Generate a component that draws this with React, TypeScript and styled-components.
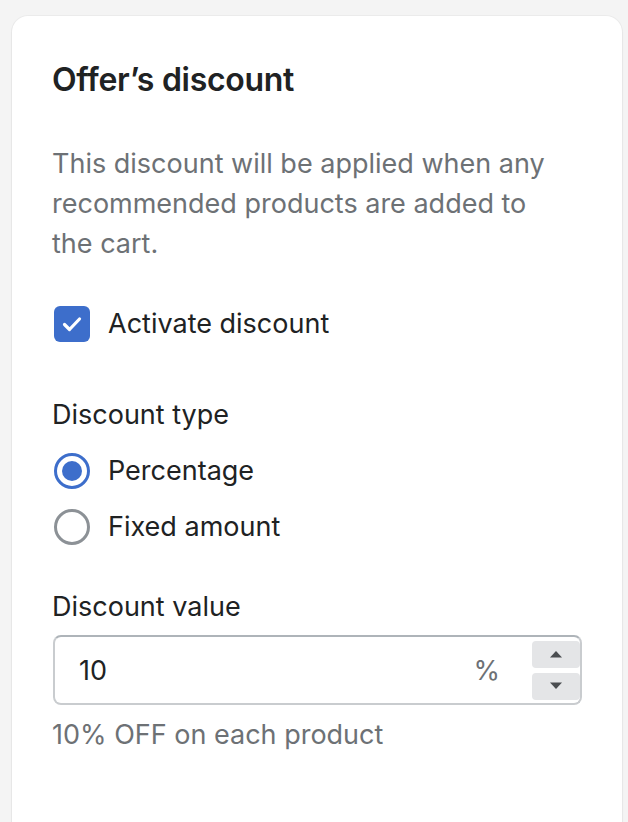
import React, { useState } from 'react';
import styled, { createGlobalStyle } from 'styled-components';

const GlobalStyle = createGlobalStyle`
  html, body {
    margin: 0;
    padding: 0;
    background: #f4f4f4;
    font-family: Inter, "Noto Sans", sans-serif;
    -webkit-font-smoothing: antialiased;
  }
`;

const Page = styled.div`
  padding: 16px 6px 0 12px;
  height: 822px;
  box-sizing: border-box;
  overflow: hidden;
`;

const Card = styled.div`
  background: #fff;
  border-radius: 16px 16px 0 0;
  box-shadow: 0 0 0 1px rgba(0, 0, 0, 0.03), 0 1px 2px rgba(0, 0, 0, 0.08);
  padding: 44px 40px 80px 40px;
  min-height: 900px;
  color: #202223;
`;

const Title = styled.h2`
  margin: 0;
  font-size: 32px;
  line-height: 40px;
  font-weight: 600;
  letter-spacing: -0.3px;
`;

const Description = styled.p`
  margin: 44px 0 0;
  max-width: 510px;
  font-size: 27px;
  line-height: 40px;
  color: #6d7175;
`;

const Row = styled.label`
  display: flex;
  align-items: center;
  gap: 18px;
  font-size: 27px;
  line-height: 40px;
  cursor: pointer;
`;

const CheckRow = styled(Row)`
  margin-top: 40px;
`;

const Box = styled.span<{ $checked: boolean }>`
  width: 36px;
  height: 36px;
  border-radius: 6px;
  box-sizing: border-box;
  margin-left: 2px;
  display: flex;
  align-items: center;
  justify-content: center;
  background: ${p => (p.$checked ? '#3d6ecb' : '#fff')};
  border: ${p => (p.$checked ? 'none' : '2px solid #8c9196')};
`;

const Radio = styled.span<{ $checked: boolean }>`
  width: 36px;
  height: 36px;
  border-radius: 50%;
  box-sizing: border-box;
  margin-left: 2px;
  border: 3px solid ${p => (p.$checked ? '#3d6ecb' : '#8c9196')};
  display: flex;
  align-items: center;
  justify-content: center;
  &::after {
    content: '';
    width: 20px;
    height: 20px;
    border-radius: 50%;
    background: ${p => (p.$checked ? '#3d6ecb' : 'transparent')};
  }
`;

const Label = styled.div`
  font-size: 27px;
  line-height: 40px;
  margin-bottom: 16px;
`;

const Group = styled.div<{ $gap: number }>`
  margin-top: ${p => p.$gap}px;
`;

const RadioList = styled.div`
  display: flex;
  flex-direction: column;
  gap: 16px;
`;

const InputWrap = styled.div`
  display: flex;
  align-items: center;
  height: 70px;
  box-sizing: border-box;
  border: 2px solid #c9cccf;
  border-top-color: #aeb4b9;
  border-radius: 8px;
  padding: 0 0 0 24px;
  margin-top: -8px;
  margin-left: 1px;
`;

const ValueInput = styled.input`
  flex: 1;
  border: none;
  outline: none;
  font: inherit;
  font-size: 27px;
  color: #202223;
  background: transparent;
  padding: 0;
  min-width: 0;
`;

const Suffix = styled.span`
  font-size: 27px;
  color: #6d7175;
  margin-right: 32px;
`;

const Spinner = styled.div`
  display: flex;
  flex-direction: column;
  gap: 5px;
`;

const SpinButton = styled.button`
  width: 48px;
  height: 27px;
  border: none;
  border-radius: 4px;
  background: #e4e5e7;
  display: flex;
  align-items: center;
  justify-content: center;
  padding: 0;
  cursor: pointer;
`;

const Help = styled.div`
  margin-top: 10px;
  font-size: 27px;
  line-height: 40px;
  color: #6d7175;
`;

const Check = () => (
  <svg width="22" height="18" viewBox="0 0 22 18">
    <path d="M3.5 9.5l5 5L18.5 4" fill="none" stroke="#fff" strokeWidth="3.2" strokeLinecap="round" strokeLinejoin="round" />
  </svg>
);

const Caret = ({ up }: { up?: boolean }) => (
  <svg width="14" height="8" viewBox="0 0 14 8">
    <path d={up ? 'M1 7.5h12L7 1z' : 'M1 0.5h12L7 7z'} fill="#4a4d50" />
  </svg>
);

export default function App() {
  const [active, setActive] = useState(true);
  const [type, setType] = useState<'percentage' | 'fixed'>('percentage');
  const [value, setValue] = useState(10);

  return (
    <Page>
      <GlobalStyle />
      <Card>
        <Title>Offer’s discount</Title>
        <Description>
          This discount will be applied when any recommended products are added to the cart.
        </Description>
        <CheckRow onClick={() => setActive(!active)}>
          <Box $checked={active}>{active && <Check />}</Box>
          Activate discount
        </CheckRow>
        <Group $gap={51}>
          <Label>Discount type</Label>
          <RadioList>
            <Row onClick={() => setType('percentage')}>
              <Radio $checked={type === 'percentage'} />
              Percentage
            </Row>
            <Row onClick={() => setType('fixed')}>
              <Radio $checked={type === 'fixed'} />
              Fixed amount
            </Row>
          </RadioList>
        </Group>
        <Group $gap={40}>
          <Label>Discount value</Label>
          <InputWrap>
            <ValueInput value={value} onChange={e => setValue(Number(e.target.value) || 0)} />
            <Suffix>{type === 'percentage' ? '%' : '$'}</Suffix>
            <Spinner>
              <SpinButton onClick={() => setValue(value + 1)}><Caret up /></SpinButton>
              <SpinButton onClick={() => setValue(Math.max(0, value - 1))}><Caret /></SpinButton>
            </Spinner>
          </InputWrap>
          <Help>{value}{type === 'percentage' ? '%' : '$'} OFF on each product</Help>
        </Group>
      </Card>
    </Page>
  );
}
